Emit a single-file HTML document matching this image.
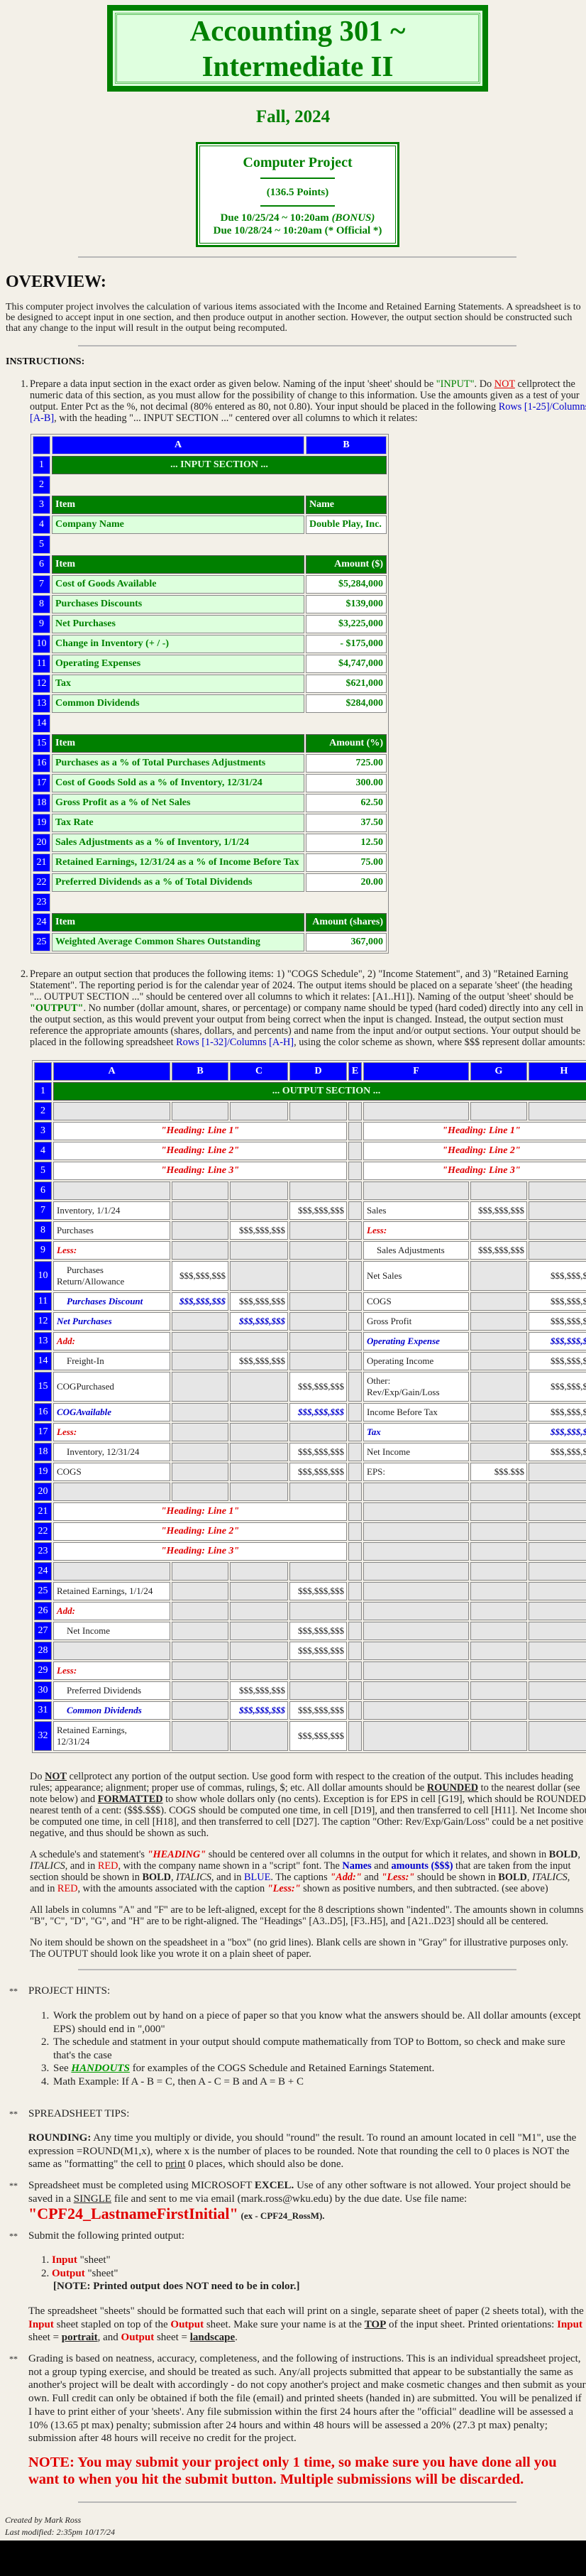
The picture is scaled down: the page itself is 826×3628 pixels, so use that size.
<!DOCTYPE html>
<html><head><meta charset="utf-8"><title>Accounting 301 ~ Intermediate II</title>
<style>
html,body{margin:0;padding:0}
body{width:826px;height:3628px;position:relative;overflow:hidden;background:#f3f0e8;font-family:"Liberation Serif",serif;color:#222;font-size:13px}
.abs{position:absolute}
.g{color:#008000}.r{color:#e00000}.b{color:#0000cc}
hr.sep{position:absolute;left:110px;width:618px;margin:0;border:0;border-top:2px solid #b8b8b8;height:0}
#title{left:151px;top:7px;width:537px;height:122px;box-sizing:border-box;border:8px solid #008000;background:#dfffdf;padding:3px}
#title .in{border:3px double #5cbf5c;height:100%;box-sizing:border-box;display:flex;flex-direction:column;justify-content:center;align-items:center;color:#008000;font-weight:bold;font-size:41px;line-height:50px}
#fall{left:0;width:826px;top:150px;text-align:center;color:#008000;font-weight:bold;font-size:25px;line-height:30px}
#proj{left:276px;top:200px;width:287px;height:148px;box-sizing:border-box;border:3px solid #008000;background:#fff;padding:2px}
#proj .in{border:1px solid #008000;height:100%;box-sizing:border-box;text-align:center;color:#008000;font-weight:bold}
.gl{width:105px;height:0;border-top:2px solid #008000;margin:0 auto}
table{border-collapse:separate;border-spacing:2px;table-layout:fixed}
table td{box-sizing:border-box;padding:0 4px;white-space:nowrap;overflow:hidden}
#inp{left:43px;top:611px;width:505px;border:1px solid #888;font-size:14px;font-weight:bold}
#inp td{height:26px;border:1px solid #888}
.hd{background:#0000ff;color:#fff;text-align:center;border-color:#bbb!important}
.nm{background:#0000ff;color:#fff;text-align:center;font-weight:normal;border-color:#bbb!important}
.sec{background:#008000;color:#e6ffe6;text-align:center;border-color:#555!important}
.ih{background:#008000;color:#fff;border-color:#555!important}
.lab{background:#ddffdd;color:#008000}
.val{background:#fff;color:#008000;text-align:right}
.bl{border-color:transparent!important}
#out{left:45px;top:1493px;width:803px;border:1px solid #888;font-size:13px}
#out td{height:26px;border:1px solid #888;color:#222}
#out tr.t td{height:42px}
#out td.x{background:#e6e6e6}
#out td.w{background:#fff}
#out td.n{background:#0000ff;color:#fff;text-align:center;font-size:14px;padding:0}
#out td.h{background:#0000ff;color:#fff;text-align:center;font-weight:bold;font-size:14px}
#out td.m{text-align:right;padding-right:3px}
#out .hed{background:#fff;text-align:center;color:#dd0000;font-weight:bold;font-style:italic;font-size:14px}
.ri{color:#dd0000!important;font-weight:bold;font-style:italic}
.bi{color:#0000cc!important;font-weight:bold;font-style:italic}
.ind{padding-left:18px!important}
p{margin:0}
.t13{font-size:14.3px;line-height:16px}
.t15{font-size:15px;line-height:18.6px}
ol{margin:0;padding:0;list-style:none}
</style></head><body>

<div id="title" class="abs"><div class="in"><div>Accounting 301 ~</div><div>Intermediate II</div></div></div>
<div id="fall" class="abs">Fall, 2024</div>
<div id="proj" class="abs"><div class="in">
<div style="font-size:20px;line-height:24px;padding-top:11px">Computer Project</div>
<div class="gl" style="margin-top:9px"></div>
<div style="font-size:15px;line-height:18px;margin-top:10px">(136.5 Points)</div>
<div class="gl" style="margin-top:9px"></div>
<div style="font-size:15px;line-height:18px;margin-top:7px">Due 10/25/24 ~ 10:20am <i>(BONUS)</i><br>Due 10/28/24 ~ 10:20am (* Official *)</div>
</div></div>

<hr class="sep" style="top:361px">
<div class="abs" style="left:8px;top:382px;font-size:24px;font-weight:bold;line-height:30px;color:#111">OVERVIEW:</div>
<p class="abs" style="left:8px;top:425px;width:818px;font-size:14px;line-height:15px">This computer project involves the calculation of various items associated with the Income and Retained Earning Statements. A spreadsheet is to be designed to accept input in one section, and then produce output in another section. However, the output section should be constructed such that any change to the input will result in the output being recomputed.</p>

<hr class="sep" style="top:486px">
<div class="abs" style="left:8px;top:501px;font-size:14px;font-weight:bold;line-height:18px;color:#111">INSTRUCTIONS:</div>

<div class="abs t13" style="left:29px;top:533px">1.</div>
<p class="abs t13" style="left:42px;top:533px;width:790px">Prepare a data input section in the exact order as given below. Naming of the input 'sheet' should be <span class="g">"INPUT"</span>. Do <u class="r">NOT</u> cellprotect the numeric data of this section, as you must allow for the possibility of change to this information. Use the amounts given as a test of your output. Enter Pct as the %, not decimal (80% entered as 80, not 0.80). Your input should be placed in the following <span class="b">Rows [1-25]/Columns [A-B]</span>, with the heading "... INPUT SECTION ..." centered over all columns to which it relates:</p>

<table id="inp" class="abs">
<colgroup><col style="width:25px"><col style="width:356px"><col style="width:114px"></colgroup>
<tr><td class="hd"></td><td class="hd">A</td><td class="hd">B</td></tr>
<tr><td class="nm">1</td><td class="sec" colspan="2">... INPUT SECTION ...</td></tr>
<tr><td class="nm">2</td><td class="bl" colspan="2"></td></tr>
<tr><td class="nm">3</td><td class="ih">Item</td><td class="ih">Name</td></tr>
<tr><td class="nm">4</td><td class="lab">Company Name</td><td class="val" style="text-align:left">Double Play, Inc.</td></tr>
<tr><td class="nm">5</td><td class="bl" colspan="2"></td></tr>
<tr><td class="nm">6</td><td class="ih">Item</td><td class="ih" style="text-align:right">Amount ($)</td></tr>
<tr><td class="nm">7</td><td class="lab">Cost of Goods Available</td><td class="val">$5,284,000</td></tr>
<tr><td class="nm">8</td><td class="lab">Purchases Discounts</td><td class="val">$139,000</td></tr>
<tr><td class="nm">9</td><td class="lab">Net Purchases</td><td class="val">$3,225,000</td></tr>
<tr><td class="nm">10</td><td class="lab">Change in Inventory (+ / -)</td><td class="val">- $175,000</td></tr>
<tr><td class="nm">11</td><td class="lab">Operating Expenses</td><td class="val">$4,747,000</td></tr>
<tr><td class="nm">12</td><td class="lab">Tax</td><td class="val">$621,000</td></tr>
<tr><td class="nm">13</td><td class="lab">Common Dividends</td><td class="val">$284,000</td></tr>
<tr><td class="nm">14</td><td class="bl" colspan="2"></td></tr>
<tr><td class="nm">15</td><td class="ih">Item</td><td class="ih" style="text-align:right">Amount (%)</td></tr>
<tr><td class="nm">16</td><td class="lab">Purchases as a % of Total Purchases Adjustments</td><td class="val">725.00</td></tr>
<tr><td class="nm">17</td><td class="lab">Cost of Goods Sold as a % of Inventory, 12/31/24</td><td class="val">300.00</td></tr>
<tr><td class="nm">18</td><td class="lab">Gross Profit as a % of Net Sales</td><td class="val">62.50</td></tr>
<tr><td class="nm">19</td><td class="lab">Tax Rate</td><td class="val">37.50</td></tr>
<tr><td class="nm">20</td><td class="lab">Sales Adjustments as a % of Inventory, 1/1/24</td><td class="val">12.50</td></tr>
<tr><td class="nm">21</td><td class="lab">Retained Earnings, 12/31/24 as a % of Income Before Tax</td><td class="val">75.00</td></tr>
<tr><td class="nm">22</td><td class="lab">Preferred Dividends as a % of Total Dividends</td><td class="val">20.00</td></tr>
<tr><td class="nm">23</td><td class="bl" colspan="2"></td></tr>
<tr><td class="nm">24</td><td class="ih">Item</td><td class="ih" style="text-align:right">Amount (shares)</td></tr>
<tr><td class="nm">25</td><td class="lab">Weighted Average Common Shares Outstanding</td><td class="val">367,000</td></tr>
</table>

<div class="abs t13" style="left:29px;top:1364px">2.</div>
<p class="abs t13" style="left:42px;top:1364px;width:784px">Prepare an output section that produces the following items: 1) "COGS Schedule", 2) "Income Statement", and 3) "Retained Earning Statement". The reporting period is for the calendar year of 2024. The output items should be placed on a separate 'sheet' (the heading "... OUTPUT SECTION ..." should be centered over all columns to which it relates: [A1..H1]). Naming of the output 'sheet' should be <b class="g">"OUTPUT"</b>. No number (dollar amount, shares, or percentage) or company name should be typed (hard coded) directly into any cell in the output section, as this would prevent your output from being correct when the input is changed. Instead, the output section must reference the appropriate amounts (shares, dollars, and percents) and name from the input and/or output sections. Your output should be placed in the following spreadsheet <span class="b">Rows [1-32]/Columns [A-H]</span>, using the color scheme as shown, where $$$ represent dollar amounts:</p>

<table id="out" class="abs">
<colgroup><col style="width:25px"><col style="width:165px"><col style="width:80px"><col style="width:82px"><col style="width:81px"><col style="width:19px"><col style="width:149px"><col style="width:80px"><col style="width:100px"></colgroup>
<tr><td class="h"></td><td class="h">A</td><td class="h">B</td><td class="h">C</td><td class="h">D</td><td class="h" style="padding:0">E</td><td class="h">F</td><td class="h">G</td><td class="h">H</td></tr>
<tr><td class="n">1</td><td colspan="8" style="background:#008000;color:#e6ffe6;text-align:center;font-weight:bold;font-size:14px;border-color:#555">... OUTPUT SECTION ...</td></tr>
<tr><td class="n">2</td><td class="x"></td><td class="x"></td><td class="x"></td><td class="x"></td><td class="x"></td><td class="x"></td><td class="x"></td><td class="x"></td></tr>
<tr><td class="n">3</td><td colspan="4" class="hed">"Heading: Line 1"</td><td class="x"></td><td colspan="3" class="hed">"Heading: Line 1"</td></tr>
<tr><td class="n">4</td><td colspan="4" class="hed">"Heading: Line 2"</td><td class="x"></td><td colspan="3" class="hed">"Heading: Line 2"</td></tr>
<tr><td class="n">5</td><td colspan="4" class="hed">"Heading: Line 3"</td><td class="x"></td><td colspan="3" class="hed">"Heading: Line 3"</td></tr>
<tr><td class="n">6</td><td class="x"></td><td class="x"></td><td class="x"></td><td class="x"></td><td class="x"></td><td class="x"></td><td class="x"></td><td class="x"></td></tr>
<tr><td class="n">7</td><td class="w">Inventory, 1/1/24</td><td class="x"></td><td class="x"></td><td class="w m">$$$,$$$,$$$</td><td class="x"></td><td class="w">Sales</td><td class="w m">$$$,$$$,$$$</td><td class="x"></td></tr>
<tr><td class="n">8</td><td class="w">Purchases</td><td class="x"></td><td class="w m">$$$,$$$,$$$</td><td class="x"></td><td class="x"></td><td class="w ri">Less:</td><td class="x"></td><td class="x"></td></tr>
<tr><td class="n">9</td><td class="w ri">Less:</td><td class="x"></td><td class="x"></td><td class="x"></td><td class="x"></td><td class="w ind">Sales Adjustments</td><td class="w m">$$$,$$$,$$$</td><td class="x"></td></tr>
<tr class="t"><td class="n">10</td><td class="w ind" style="line-height:16px">Purchases<br><span style="margin-left:-14px">Return/Allowance</span></td><td class="w m">$$$,$$$,$$$</td><td class="x"></td><td class="x"></td><td class="x"></td><td class="w">Net Sales</td><td class="x"></td><td class="w m">$$$,$$$,$$$</td></tr>
<tr><td class="n">11</td><td class="w ind bi">Purchases Discount</td><td class="w m bi">$$$,$$$,$$$</td><td class="w m">$$$,$$$,$$$</td><td class="x"></td><td class="x"></td><td class="w">COGS</td><td class="x"></td><td class="w m">$$$,$$$,$$$</td></tr>
<tr><td class="n">12</td><td class="w bi">Net Purchases</td><td class="x"></td><td class="w m bi">$$$,$$$,$$$</td><td class="x"></td><td class="x"></td><td class="w">Gross Profit</td><td class="x"></td><td class="w m">$$$,$$$,$$$</td></tr>
<tr><td class="n">13</td><td class="w ri">Add:</td><td class="x"></td><td class="x"></td><td class="x"></td><td class="x"></td><td class="w bi">Operating Expense</td><td class="x"></td><td class="w m bi">$$$,$$$,$$$</td></tr>
<tr><td class="n">14</td><td class="w ind">Freight-In</td><td class="x"></td><td class="w m">$$$,$$$,$$$</td><td class="x"></td><td class="x"></td><td class="w">Operating Income</td><td class="x"></td><td class="w m">$$$,$$$,$$$</td></tr>
<tr class="t"><td class="n">15</td><td class="w">COGPurchased</td><td class="x"></td><td class="x"></td><td class="w m">$$$,$$$,$$$</td><td class="x"></td><td class="w" style="line-height:16px">Other:<br>Rev/Exp/Gain/Loss</td><td class="x"></td><td class="w m">$$$,$$$,$$$</td></tr>
<tr><td class="n">16</td><td class="w bi">COGAvailable</td><td class="x"></td><td class="x"></td><td class="w m bi">$$$,$$$,$$$</td><td class="x"></td><td class="w">Income Before Tax</td><td class="x"></td><td class="w m">$$$,$$$,$$$</td></tr>
<tr><td class="n">17</td><td class="w ri">Less:</td><td class="x"></td><td class="x"></td><td class="x"></td><td class="x"></td><td class="w bi">Tax</td><td class="x"></td><td class="w m bi">$$$,$$$,$$$</td></tr>
<tr><td class="n">18</td><td class="w ind">Inventory, 12/31/24</td><td class="x"></td><td class="x"></td><td class="w m">$$$,$$$,$$$</td><td class="x"></td><td class="w">Net Income</td><td class="x"></td><td class="w m">$$$,$$$,$$$</td></tr>
<tr><td class="n">19</td><td class="w">COGS</td><td class="x"></td><td class="x"></td><td class="w m">$$$,$$$,$$$</td><td class="x"></td><td class="w">EPS:</td><td class="w m">$$$.$$$</td><td class="x"></td></tr>
<tr><td class="n">20</td><td class="x"></td><td class="x"></td><td class="x"></td><td class="x"></td><td class="x"></td><td class="x"></td><td class="x"></td><td class="x"></td></tr>
<tr><td class="n">21</td><td colspan="4" class="hed">"Heading: Line 1"</td><td class="x"></td><td class="x"></td><td class="x"></td><td class="x"></td></tr>
<tr><td class="n">22</td><td colspan="4" class="hed">"Heading: Line 2"</td><td class="x"></td><td class="x"></td><td class="x"></td><td class="x"></td></tr>
<tr><td class="n">23</td><td colspan="4" class="hed">"Heading: Line 3"</td><td class="x"></td><td class="x"></td><td class="x"></td><td class="x"></td></tr>
<tr><td class="n">24</td><td class="x"></td><td class="x"></td><td class="x"></td><td class="x"></td><td class="x"></td><td class="x"></td><td class="x"></td><td class="x"></td></tr>
<tr><td class="n">25</td><td class="w">Retained Earnings, 1/1/24</td><td class="x"></td><td class="x"></td><td class="w m">$$$,$$$,$$$</td><td class="x"></td><td class="x"></td><td class="x"></td><td class="x"></td></tr>
<tr><td class="n">26</td><td class="w ri">Add:</td><td class="x"></td><td class="x"></td><td class="x"></td><td class="x"></td><td class="x"></td><td class="x"></td><td class="x"></td></tr>
<tr><td class="n">27</td><td class="w ind">Net Income</td><td class="x"></td><td class="x"></td><td class="w m">$$$,$$$,$$$</td><td class="x"></td><td class="x"></td><td class="x"></td><td class="x"></td></tr>
<tr><td class="n">28</td><td class="x"></td><td class="x"></td><td class="x"></td><td class="w m">$$$,$$$,$$$</td><td class="x"></td><td class="x"></td><td class="x"></td><td class="x"></td></tr>
<tr><td class="n">29</td><td class="w ri">Less:</td><td class="x"></td><td class="x"></td><td class="x"></td><td class="x"></td><td class="x"></td><td class="x"></td><td class="x"></td></tr>
<tr><td class="n">30</td><td class="w ind">Preferred Dividends</td><td class="x"></td><td class="w m">$$$,$$$,$$$</td><td class="x"></td><td class="x"></td><td class="x"></td><td class="x"></td><td class="x"></td></tr>
<tr><td class="n">31</td><td class="w ind bi">Common Dividends</td><td class="x"></td><td class="w m bi">$$$,$$$,$$$</td><td class="w m">$$$,$$$,$$$</td><td class="x"></td><td class="x"></td><td class="x"></td><td class="x"></td></tr>
<tr class="t"><td class="n">32</td><td class="w" style="line-height:16px">Retained Earnings,<br>12/31/24</td><td class="x"></td><td class="x"></td><td class="w m">$$$,$$$,$$$</td><td class="x"></td><td class="x"></td><td class="x"></td><td class="x"></td></tr>
</table>

<p class="abs t13" style="left:42px;top:2494px;width:800px">Do <b><u>NOT</u></b> cellprotect any portion of the output section. Use good form with respect to the creation of the output. This includes heading rules; appearance; alignment; proper use of commas, rulings, $; etc. All dollar amounts should be <b><u>ROUNDED</u></b> to the nearest dollar (see note below) and <b><u>FORMATTED</u></b> to show whole dollars only (no cents). Exception is for EPS in cell [G19], which should be ROUNDED to nearest tenth of a cent: ($$$.$$$). COGS should be computed one time, in cell [D19], and then transferred to cell [H11]. Net Income should be computed one time, in cell [H18], and then transferred to cell [D27]. The caption "Other: Rev/Exp/Gain/Loss" could be a net positive or negative, and thus should be shown as such.</p>

<p class="abs t13" style="left:42px;top:2604px;width:784px">A schedule's and statement's <b><i class="r">"HEADING"</i></b> should be centered over all columns in the output for which it relates, and shown in <b>BOLD</b>, <i>ITALICS</i>, and in <span class="r">RED</span>, with the company name shown in a "script" font. The <b class="b">Names</b> and <b class="b">amounts ($$$)</b> that are taken from the input section should be shown in <b>BOLD</b>, <i>ITALICS</i>, and in <span class="b">BLUE</span>. The captions <b><i class="r">"Add:"</i></b> and <b><i class="r">"Less:"</i></b> should be shown in <b>BOLD</b>, <i>ITALICS</i>, and in <span class="r">RED</span>, with the amounts associated with the caption <b><i class="r">"Less:"</i></b> shown as positive numbers, and then subtracted. (see above)</p>

<p class="abs t13" style="left:42px;top:2682px;width:784px">All labels in columns "A" and "F" are to be left-aligned, except for the 8 descriptions shown "indented". The amounts shown in columns "B", "C", "D", "G", and "H" are to be right-aligned. The "Headings" [A3..D5], [F3..H5], and [A21..D23] should all be centered.</p>

<p class="abs t13" style="left:42px;top:2728px;width:784px">No item should be shown on the speadsheet in a "box" (no grid lines). Blank cells are shown in "Gray" for illustrative purposes only. The OUTPUT should look like you wrote it on a plain sheet of paper.</p>

<hr class="sep" style="top:2773px">

<div class="abs t15" style="left:13px;top:2795px;font-size:12px">**</div>
<div class="abs t15" style="left:40px;top:2795px">PROJECT HINTS:</div>
<div class="abs t15" style="left:58px;top:2830px;width:768px">
<div style="display:flex"><span style="width:17px">1.</span><span style="flex:1">Work the problem out by hand on a piece of paper so that you know what the answers should be. All dollar amounts (except EPS) should end in ",000"</span></div>
<div style="display:flex"><span style="width:17px">2.</span><span style="flex:1">The schedule and statment in your output should compute mathematically from TOP to Bottom, so check and make sure that's the case</span></div>
<div style="display:flex"><span style="width:17px">3.</span><span style="flex:1">See <b><i><u style="color:#009900">HANDOUTS</u></i></b> for examples of the COGS Schedule and Retained Earnings Statement.</span></div>
<div style="display:flex"><span style="width:17px">4.</span><span style="flex:1">Math Example: If A - B = C, then A - C = B and A = B + C</span></div>
</div>

<div class="abs t15" style="left:13px;top:2968px;font-size:12px">**</div>
<div class="abs t15" style="left:40px;top:2968px">SPREADSHEET TIPS:</div>
<p class="abs t15" style="left:40px;top:3002px;width:786px"><b>ROUNDING:</b> Any time you multiply or divide, you should "round" the result. To round an amount located in cell "M1", use the expression =ROUND(M1,x), where x is the number of places to be rounded. Note that rounding the cell to 0 places is NOT the same as "formatting" the cell to <u>print</u> 0 places, which should also be done.</p>

<div class="abs t15" style="left:13px;top:3069px;font-size:12px">**</div>
<p class="abs t15" style="left:40px;top:3069px;width:786px">Spreadsheet must be completed using MICROSOFT <b>EXCEL.</b> Use of any other software is not allowed. Your project should be saved in a <u>SINGLE</u> file and sent to me via email (mark.ross@wku.edu) by the due date. Use file name:<br><b class="r" style="font-size:22px;line-height:24px">"CPF24_LastnameFirstInitial"</b> <b style="font-size:13px">(ex - CPF24_RossM).</b></p>

<div class="abs t15" style="left:13px;top:3140px;font-size:12px">**</div>
<div class="abs t15" style="left:40px;top:3140px">Submit the following printed output:</div>
<div class="abs t15" style="left:58px;top:3174px;width:768px">
<div>1. <b class="r">Input</b> "sheet"</div>
<div>2. <b class="r">Output</b> "sheet"</div>
<div style="padding-left:17px"><b>[NOTE: Printed output does NOT need to be in color.]</b></div>
</div>

<p class="abs t15" style="left:40px;top:3246px;width:786px">The spreadsheet "sheets" should be formatted such that each will print on a single, separate sheet of paper (2 sheets total), with the <b class="r">Input</b> sheet stapled on top of the <b class="r">Output</b> sheet. Make sure your name is at the <b><u>TOP</u></b> of the input sheet. Printed orientations: <b class="r">Input</b> sheet = <b><u>portrait</u></b>, and <b class="r">Output</b> sheet = <b><u>landscape</u></b>.</p>

<div class="abs t15" style="left:13px;top:3313px;font-size:12px">**</div>
<p class="abs t15" style="left:40px;top:3313px;width:786px;line-height:18.7px">Grading is based on neatness, accuracy, completeness, and the following of instructions. This is an individual spreadsheet project, not a group typing exercise, and should be treated as such. Any/all projects submitted that appear to be substantially the same as another's project will be dealt with accordingly - do not copy another's project and make cosmetic changes and then submit as your own. Full credit can only be obtained if both the file (email) and printed sheets (handed in) are submitted. You will be penalized if I have to print either of your 'sheets'. Any file submission within the first 24 hours after the "official" deadline will be assessed a 10% (13.65 pt max) penalty; submission after 24 hours and within 48 hours will be assessed a 20% (27.3 pt max) penalty; submission after 48 hours will receive no credit for the project.</p>

<p class="abs" style="left:40px;top:3456px;width:786px;font-size:20.5px;line-height:24px;font-weight:bold;color:#e00000">NOTE: You may submit your project only 1 time, so make sure you have done all you want to when you hit the submit button. Multiple submissions will be discarded.</p>

<hr class="sep" style="top:3523px">
<div class="abs" style="left:7px;top:3541px;font-size:12px;line-height:17px;font-style:italic">Created by Mark Ross<br>Last modified: 2:35pm 10/17/24</div>

<div class="abs" style="left:0;top:3578px;width:826px;height:50px;background:#000"></div>
</body></html>
